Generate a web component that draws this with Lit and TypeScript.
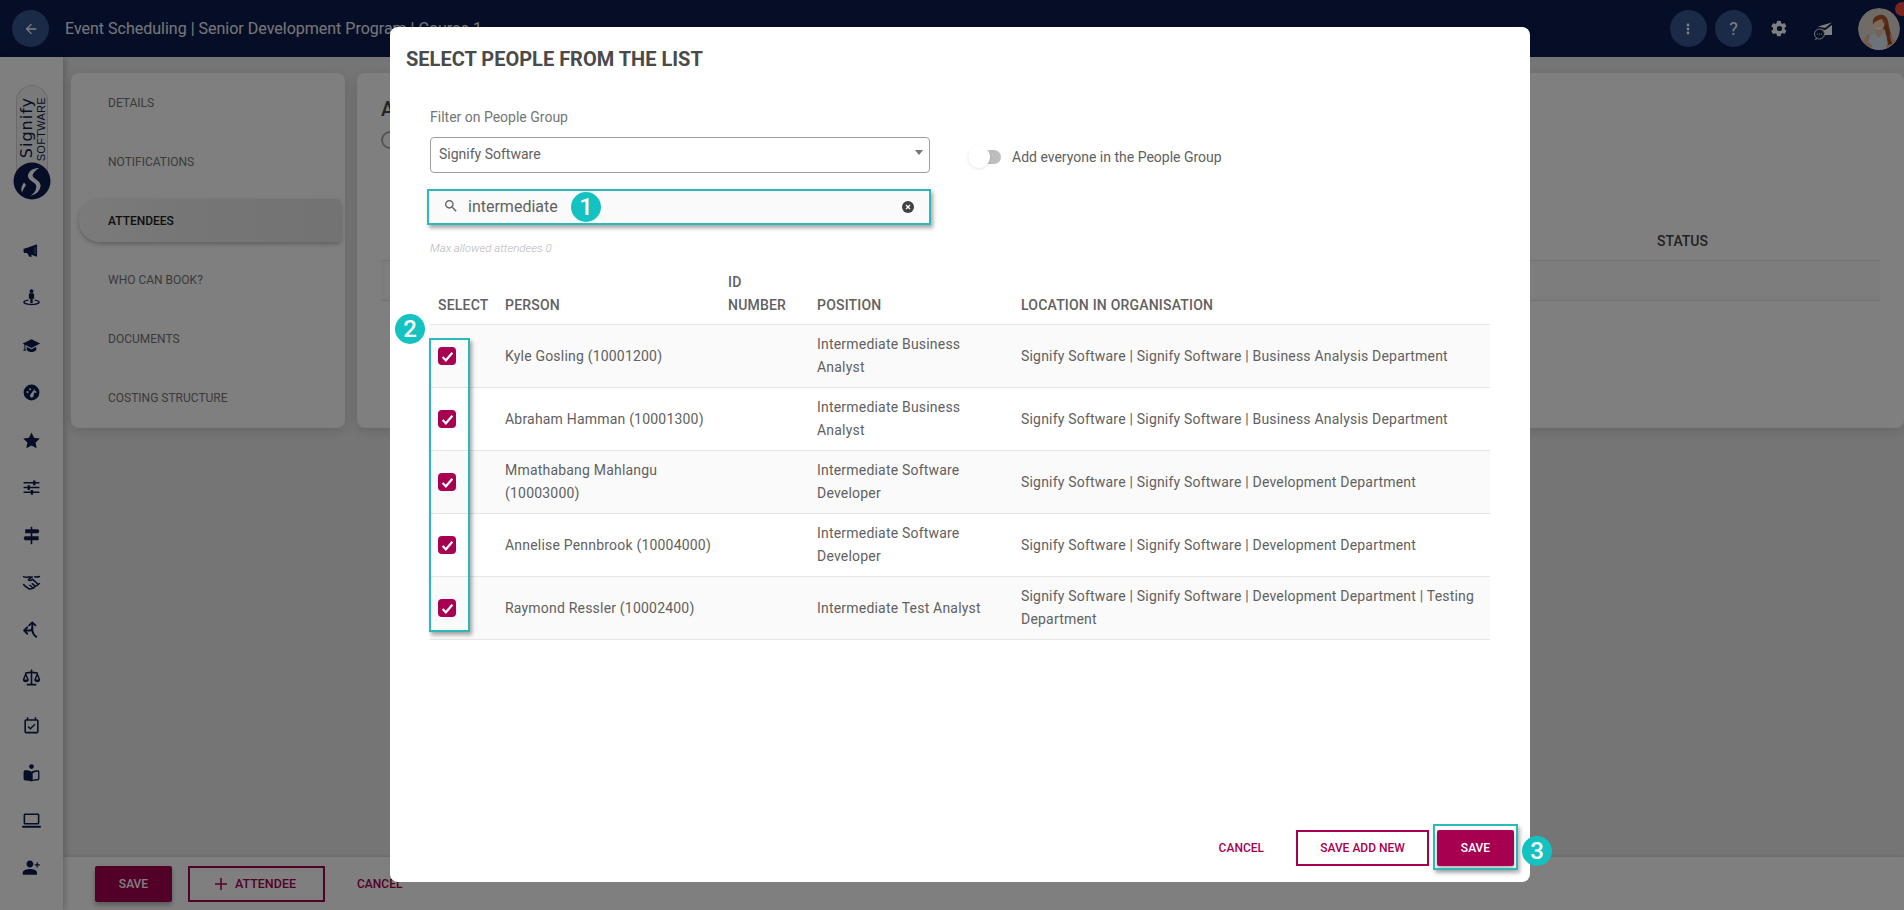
import { LitElement, html, css, svg } from "lit";
import { customElement, state } from "lit/decorators.js";

const ICONS = [
  // megaphone
  svg`<path d="M4 9.5 19 4v16L4 14.500z"/><rect x="2" y="9.500" width="5" height="5.500" rx="1"/><path d="M7 15h4l1.400 5H9z"/><path d="M15.500 8v8l2 1V7z" fill="#fff" opacity=".25"/>`,
  // person on ring
  svg`<circle cx="12" cy="4" r="2.400"/><path d="M8.700 8.200c0-.9.7-1.500 1.500-1.500h3.600c.8 0 1.500.6 1.500 1.500v5.300h-1.800V19h-3v-5.500H8.700z"/><path fill-rule="evenodd" d="M8 14.600v1.600c-2.700.4-4.500 1.100-4.500 1.800 0 1 3.800 1.900 8.500 1.900s8.500-.9 8.500-1.900c0-.7-1.800-1.400-4.500-1.800v-1.600c4 .5 6.500 1.800 6.500 3.400 0 2.100-4.500 3.700-10.500 3.700S1.500 20.100 1.500 18c0-1.600 2.500-2.900 6.500-3.400z"/>`,
  // graduation cap
  svg`<path d="M6 13.500v4.200c1.500 1.700 3.700 2.600 6 2.600s4.500-.9 6-2.600v-4.200L12 16.700z"/><path d="M12 4 1 9.500l2 1.100V17H1.800v1.500H5V17H4.300v-5.700L12 15l11-5.500z"/>`,
  // gauge
  svg`<path fill-rule="evenodd" d="M12 2a10 10 0 1 0 0 20 10 10 0 0 0 0-20zM7 12.800a1.300 1.300 0 1 1 0-2.600 1.300 1.300 0 0 1 0 2.600zm2-5a1.300 1.300 0 1 1 2.600 0 1.300 1.300 0 0 1-2.600 0zm4.800 9.900a2.200 2.200 0 0 1-3.600-2.400L15.500 8l.9.400-1.800 7.300a2.200 2.200 0 0 1-.8 2zm3.200-5a1.300 1.300 0 1 1 0-2.600 1.300 1.300 0 0 1 0 2.600z"/>`,
  // star
  svg`<path d="M12 1.800 15.200 8.500l7.300 1-5.300 5.100 1.300 7.300L12 18.400l-6.500 3.500 1.300-7.300L1.500 9.500l7.300-1z"/>`,
  // tune
  svg`<path d="M2 5h12V3h3v2h5v2h-5v2h-3V7H2zm0 6h5V9h3v2h12v2H10v2H7v-2H2zm0 6h9v-2h3v2h8v2h-8v2h-3v-2H2z"/>`,
  // signpost
  svg`<path d="M11 1h2v3h7.500l1.500 2.500L20.500 9H13v3h-2V9H4V4h7zM3.500 13H11v-1h2v1h8v5h-8v5h-2v-5H3.500L2 15.500z"/>`,
  // handshake
  svg`<g fill="none" stroke="currentColor" stroke-width="1.900" stroke-linecap="round" stroke-linejoin="round"><path d="M2 4.500c2 1 4 1 6 .5h5l-5 3.500c1.500 1.500 3.500 1 5.500-.5l6 5.500"/><path d="M22 4.500c-2 .8-4 .8-6 .2"/><path d="M2 14.500c1.500 2 3.500 3.500 5.500 4.500 1 1.500 3.500 1.500 5 .5 1.500 0 3-1 3.500-2.300 2-1 4-2 6-4"/><path d="M10 15.500l3 2.500M13 13.500l3.500 3"/></g>`,
  // split arrows
  svg`<g fill="none" stroke="currentColor" stroke-width="2.400" stroke-linecap="round" stroke-linejoin="round"><path d="M13 3v7c0 3 1 7 5 10"/><path d="M3 12h6c2 0 4-.5 4-3"/><path d="M9 5.500 13 2l4 3.500"/><path d="M6.500 8 3 12l3.500 4"/></g>`,
  // scale
  svg`<path d="M11 2h2v2.500l7 1V7l3 7.500c0 2.200-1.700 3.500-3.700 3.500s-3.800-1.300-3.800-3.500L18.500 7.300 13 6.500V20h5v2H6v-2h5V6.500l-5.500.8L8.500 14.500C8.500 16.700 6.700 18 4.700 18S1 16.700 1 14.500L4 7V5.500l7-1zM3 14.500h3.500L4.800 10zm14.500 0H21L19.300 10z"/>`,
  // calendar check
  svg`<path fill-rule="evenodd" d="M6 1.500h2V4h8V1.500h2V4h1c1.100 0 2 .9 2 2v14c0 1.100-.9 2-2 2H5c-1.100 0-2-.9-2-2V6c0-1.100.9-2 2-2h1zM5 6v14h14V6z"/><path d="m10.500 17.500-3.500-3.500 1.300-1.300 2.200 2.200 5.200-5.200 1.300 1.300z"/>`,
  // person reading
  svg`<circle cx="12" cy="4.500" r="3"/><path fill-rule="evenodd" d="M12 11c-2-1.500-5-2-8-2-1.100 0-2 .9-2 2v9c0 1.100.9 2 2 2 3 0 6 .3 8 1.500 2-1.200 5-1.500 8-1.500 1.100 0 2-.9 2-2v-9c0-1.100-.9-2-2-2-3 0-6 .5-8 2zm1.500 2v8.200c1.800-.6 4-.9 6.800-.9V11c-2.800 0-5 .6-6.800 2z"/>`,
  // laptop
  svg`<path d="M20 17c1.100 0 2-.9 2-2V5c0-1.100-.9-2-2-2H4c-1.100 0-2 .9-2 2v10c0 1.100.9 2 2 2zM4 5h16v10H4z" fill-rule="evenodd"/><rect y="18.500" width="24" height="2.500" rx="1.200"/>`,
  // person add
  svg`<path d="M10 12c2.500 0 4.300-1.900 4.300-4.300S12.500 3.300 10 3.300 5.700 5.200 5.700 7.700 7.500 12 10 12zm0 2c-3.500 0-9 1.400-9 4.400V21h18v-2.600c0-3-5.500-4.400-9-4.400zM20 8V5.500h-1.500V8H16v1.500h2.500V12H20V9.500h2.500V8z"/>`,
  // cut off at the bottom of the window
  svg`<circle cx="12" cy="9" r="2.500"/><path d="M8 12h8v8H8z"/>`,
];

@customElement("sf-icon")
export class SfIcon extends LitElement {
  static properties = { d: { type: String }, size: { type: Number } };
  declare d: string;
  declare size: number;

  static styles = css`
    :host {
      display: inline-flex;
    }
    svg {
      display: block;
      fill: currentColor;
    }
  `;

  render() {
    return html`<svg
      viewBox="0 0 24 24"
      width=${this.size ?? 24}
      height=${this.size ?? 24}
    >
      <path d=${this.d}></path>
    </svg>`;
  }
}

const P_BACK =
  "M20 11H7.830l5.590-5.590L12 4l-8 8 8 8 1.410-1.410L7.830 13H20v-2z";
const P_SEARCH =
  "M15.500 14h-.790l-.280-.270C15.410 12.590 16 11.110 16 9.500 16 5.910 13.090 3 9.500 3S3 5.910 3 9.500 5.910 16 9.500 16c1.610 0 3.090-.590 4.230-1.570l.270.280v.790l5 4.990L20.490 19l-4.990-5zm-6 0C7.010 14 5 11.990 5 9.500S7.010 5 9.500 5 14 7.010 14 9.500 11.990 14 9.500 14z";
const P_GEAR =
  "M21.300 14.600 19.200 13.400a8 8 0 0 0 0-2.800l2.100-1.200c.3-.1.400-.4.300-.7a11 11 0 0 0-2.400-4.200.6.600 0 0 0-.7-.1l-2.100 1.200a8 8 0 0 0-2.400-1.400V2c0-.3-.2-.5-.5-.6a11 11 0 0 0-4.800 0c-.3.100-.5.300-.5.600v2.400a8 8 0 0 0-2.400 1.400L3.700 4.600a.6.600 0 0 0-.7.100 11 11 0 0 0-2.400 4.200c-.1.300 0 .6.300.7l2.100 1.200a8 8 0 0 0 0 2.800l-2.100 1.200c-.3.100-.4.400-.3.700a11 11 0 0 0 2.400 4.200c.2.200.5.300.7.100l2.100-1.200a8 8 0 0 0 2.400 1.400V22c0 .3.2.5.5.6a11 11 0 0 0 4.800 0c.3-.1.5-.3.500-.6v-2.400a8 8 0 0 0 2.400-1.400l2.100 1.200c.2.200.5.100.7-.1a11 11 0 0 0 2.400-4.200c.1-.3 0-.6-.3-.7zM12 15.700a3.700 3.700 0 1 1 0-7.400 3.700 3.700 0 0 1 0 7.400z";

type Person = { name: string; position: string; location: string };

const DEV = "Signify Software | Signify Software | Development Department";
const BA = "Signify Software | Signify Software | Business Analysis Department";

const PEOPLE: Person[] = [
  { name: "Kyle Gosling (10001200)", position: "Intermediate Business Analyst", location: BA },
  { name: "Abraham Hamman (10001300)", position: "Intermediate Business Analyst", location: BA },
  { name: "Mmathabang Mahlangu (10003000)", position: "Intermediate Software Developer", location: DEV },
  { name: "Annelise Pennbrook (10004000)", position: "Intermediate Software Developer", location: DEV },
  { name: "Raymond Ressler (10002400)", position: "Intermediate Test Analyst", location: DEV + " | Testing Department" },
];

const MENU = ["Details", "Notifications", "Attendees", "Who can book?", "Documents", "Costing structure"];

@customElement("app-root")
export class AppRoot extends LitElement {
  @state() private selected = "Attendees";

  static styles = css`
    :host {
      display: flex;
      flex-direction: column;
      position: relative;
      width: 1904px;
      height: 910px;
      overflow: hidden;
      background: #ebebeb;
      font-family: Roboto, "Liberation Sans", sans-serif;
      font-size: 14px;
      color: #616161;
    }

    /* top bar */
    .topbar {
      flex: none;
      display: flex;
      align-items: center;
      height: 57px;
      background: #0c1c4e;
      color: #fff;
    }
    .round {
      display: flex;
      align-items: center;
      justify-content: center;
      width: 37px;
      height: 37px;
      border-radius: 50%;
      background: #36548f;
      color: #fff;
    }
    .back {
      margin-left: 12px;
    }
    .page-title {
      margin-left: 16px;
      font-size: 16px;
      white-space: nowrap;
      color: #fff;
      opacity: 0.92;
    }
    .top-actions {
      margin-left: auto;
      display: flex;
      align-items: center;
      margin-right: 4px;
    }
    .top-actions .help {
      margin-left: 8.500px;
      font-size: 18px;
    }
    .gear {
      margin-left: 18.500px;
    }
    .mail {
      margin-left: 24.500px;
      width: 22px;
      height: 22px;
      color: #fff;
    }
    .avatar-wrap {
      position: relative;
      margin-left: 24px;
      width: 42px;
      height: 42px;
    }
    .avatar {
      display: block;
      border-radius: 50%;
    }
    .dot {
      position: absolute;
      top: -6px;
      right: -9px;
      width: 14px;
      height: 14px;
      border-radius: 50%;
      background: #f04a44;
    }

    .body {
      flex: 1;
      display: flex;
      min-height: 0;
    }

    /* left rail */
    .rail {
      flex: none;
      width: 63px;
      display: flex;
      flex-direction: column;
      align-items: center;
      background: #fff;
      box-shadow: 2px 0 6px rgba(0, 0, 0, 0.22);
      color: #0c1c4e;
      z-index: 1;
    }
    .logo {
      position: relative;
      flex: none;
      margin-top: 28px;
      width: 32px;
      height: 100px;
      display: flex;
      justify-content: center;
    }
    .logo-pill {
      width: 32px;
      height: 90px;
      border-radius: 16px 16px 0 0;
      border: 1px solid #d4d4d4;
      box-sizing: border-box;
      border-bottom: none;
      background: #f5f5f5;
      display: flex;
      justify-content: center;
      align-items: flex-start;
      padding-top: 11px;
      color: #0c1c4e;
    }
    .logo-pill span {
      writing-mode: vertical-rl;
      transform: rotate(180deg);
      white-space: nowrap;
    }
    .logo-name {
      font-family: "DejaVu Sans", sans-serif;
      font-size: 16px;
      line-height: 18px;
      letter-spacing: 1px;
    }
    .logo-sub {
      font-family: "Liberation Sans", sans-serif;
      font-size: 11px;
      line-height: 10px;
      letter-spacing: 0.3px;
    }
    .logo-mark {
      position: absolute;
      left: -3px;
      top: 77px;
    }
    .rail-icons {
      flex: none;
      margin-top: 55.500px;
      display: flex;
      flex-direction: column;
      align-items: center;
      gap: 28.500px;
    }
    .rail-icons svg {
      display: block;
      width: 19px;
      height: 19px;
      fill: currentColor;
    }

    /* page behind the dialog */
    .main {
      flex: 1;
      min-width: 0;
      display: flex;
      flex-direction: column;
    }
    .cards {
      flex: 1;
      display: flex;
      align-items: flex-start;
      gap: 12px;
      padding: 16px 0 0 8px;
    }
    .card {
      height: 355px;
      background: #fff;
      border-radius: 8px;
      box-shadow: 0 3px 12px rgba(0, 0, 0, 0.14);
      box-sizing: border-box;
    }
    .menu {
      flex: none;
      width: 274px;
      padding: 8px 4px 0 8px;
      display: flex;
      flex-direction: column;
    }
    .menu-item {
      height: 43px;
      flex: none;
      margin-bottom: 16px;
      display: flex;
      align-items: center;
      padding-left: 29px;
      font-size: 12px;
      color: #757575;
      text-transform: uppercase;
    }
    .menu-item.on {
      background: linear-gradient(90deg, #f6f6f6, #ececec 45%, #e6e6e6);
      border-radius: 22px 5px 5px 22px;
      box-shadow: 0 2px 5px rgba(0, 0, 0, 0.28);
      color: #1a1a1a;
      font-weight: 500;
    }
    .content {
      flex: 1;
      position: relative;
      padding: 24px 24px 0 24px;
    }
    .content h2 {
      margin: 0;
      font-size: 20px;
      font-weight: 500;
      line-height: 24px;
      color: #444;
    }
    .radio {
      margin-top: 10px;
      width: 18px;
      height: 18px;
      box-sizing: border-box;
      border: 2px solid #aaa;
      border-radius: 50%;
    }
    .bg-head {
      margin-top: 75px;
      height: 37px;
      box-sizing: border-box;
      display: flex;
      justify-content: flex-end;
      padding-right: 172px;
      font-weight: 500;
      color: #444;
      line-height: 34px;
      border-bottom: 1px solid #e6e6e6;
      font-size: 14px;
    }
    .bg-row {
      height: 40px;
      box-sizing: border-box;
      background: #fafafa;
      border-bottom: 1px solid #e6e6e6;
    }
    .footer {
      flex: none;
      height: 53px;
      background: #fff;
      box-shadow: 0 -1px 3px rgba(0, 0, 0, 0.12);
      display: flex;
      align-items: center;
      padding-left: 32px;
      gap: 16px;
    }

    /* buttons */
    .btn {
      display: flex;
      align-items: center;
      justify-content: center;
      height: 36px;
      box-sizing: border-box;
      font-size: 12px;
      font-weight: 500;
      color: #a70050;
      white-space: nowrap;
    }
    .btn.solid {
      width: 77px;
      background: #a70050;
      color: #fff;
      border-radius: 2px;
      box-shadow: 0 3px 5px rgba(0, 0, 0, 0.3);
    }
    .btn.line {
      border: 2px solid #a70050;
    }
    .btn.add {
      width: 137px;
      gap: 7px;
      padding-right: 3px;
      font-size: 12.500px;
    }
    .btn.text {
      padding: 0 16px;
    }

    /* dialog */
    .scrim {
      position: absolute;
      inset: 0;
      background: rgba(0, 0, 0, 0.5);
      z-index: 5;
    }
    .modal {
      position: absolute;
      left: 390px;
      top: 27px;
      width: 1140px;
      height: 855px;
      background: #fff;
      border-radius: 8px;
      display: flex;
      flex-direction: column;
    }
    .modal h1 {
      margin: 0;
      height: 64px;
      line-height: 64px;
      padding-left: 16px;
      font-size: 20px;
      font-weight: 700;
      color: #4a4a4a;
    }
    .modal-body {
      padding: 16px 40px 0;
    }
    .filters {
      display: flex;
      align-items: flex-start;
    }
    .filter-col {
      flex: none;
      width: 500px;
    }
    .field-label {
      height: 20px;
      line-height: 20px;
      color: #757575;
    }
    .select {
      position: relative;
      margin-top: 10px;
      height: 36px;
      box-sizing: border-box;
      border: 1px solid #9e9e9e;
      border-radius: 4px;
      padding: 0 0 2px 8px;
      display: flex;
      align-items: center;
      color: #616161;
    }
    .caret {
      position: absolute;
      right: 6px;
      top: 12px;
      width: 0;
      height: 0;
      border-left: 4px solid transparent;
      border-right: 4px solid transparent;
      border-top: 5px solid #757575;
    }
    .search {
      position: relative;
      margin: 16px -1px 0 -3px;
      height: 36px;
      box-sizing: border-box;
      border: 2px solid #2db9b9;
      box-shadow: 2px 3px 4px rgba(0, 0, 0, 0.35);
      background: #fafafa;
      display: flex;
      align-items: center;
      padding: 0 0 2px 14px;
      gap: 9px;
      font-size: 16px;
      color: #616161;
    }
    .search .clear {
      position: absolute;
      right: 15px;
      top: 10px;
      width: 12px;
      height: 12px;
    }
    .badge {
      position: absolute;
      display: flex;
      align-items: center;
      justify-content: center;
      width: 30px;
      height: 30px;
      border-radius: 50%;
      background: #14c2c2;
      color: #fff;
      font-size: 24px;
      font-weight: 500;
      line-height: 1;
      z-index: 2;
    }
    .search .badge {
      left: 142px;
      top: 1px;
    }
    .hint {
      margin-top: 15px;
      height: 16px;
      line-height: 16px;
      font-size: 11.500px;
      font-style: italic;
      font-weight: 300;
      color: #b5b5b5;
    }
    .toggle-row {
      margin: 39px 0 0 38px;
      display: flex;
      align-items: center;
      gap: 11px;
      color: #616161;
    }
    .toggle {
      position: relative;
      width: 33px;
      height: 14px;
      margin: 4px 0;
      border-radius: 7px;
      background: #bdbdbd;
    }
    .knob {
      position: absolute;
      left: 0;
      top: -4px;
      width: 22px;
      height: 22px;
      border-radius: 50%;
      background: #fff;
      box-shadow: 0 1px 3px rgba(0, 0, 0, 0.1);
    }

    /* people table */
    .table {
      position: relative;
      margin-top: 15px;
      letter-spacing: 0.2px;
    }
    .grid {
      display: grid;
      grid-template-columns: 67px 223px 89px 204px 1fr;
    }
    .grid > div {
      padding: 0 8px;
      line-height: 23px;
    }
    .head {
      align-items: end;
      height: 54px;
      padding-bottom: 8px;
      box-sizing: border-box;
      border-bottom: 1px solid #e6e6e6;
      font-weight: 500;
      color: #616161;
    }
    .id-col {
      width: min-content;
    }
    .row {
      align-items: center;
      height: 63px;
      box-sizing: border-box;
      border-bottom: 1px solid #e6e6e6;
      color: #616161;
    }
    .row:nth-of-type(even) {
      background: #fafafa;
    }
    .check {
      display: flex;
      align-items: center;
      justify-content: center;
      width: 18px;
      height: 18px;
      border-radius: 4px;
      background: #a70050;
    }
    .mark-col {
      position: absolute;
      left: -1px;
      top: 67px;
      width: 41px;
      height: 294px;
      box-sizing: border-box;
      border: 2px solid #2db9b9;
      box-shadow: 2px 3px 4px rgba(0, 0, 0, 0.35);
      pointer-events: none;
    }
    .table .badge {
      left: -35px;
      top: 43px;
      letter-spacing: 0;
    }

    .actions {
      margin-top: auto;
      display: flex;
      justify-content: flex-end;
      align-items: center;
      padding: 0 16px 16px 0;
    }
    .actions .line {
      width: 133px;
      margin: 0 8px 0 16px;
    }
    .actions .solid {
      position: relative;
    }
    .save-mark {
      position: absolute;
      inset: -6px -4px -4px -4px;
      border: 2px solid #2db9b9;
      box-shadow: 2px 3px 4px rgba(0, 0, 0, 0.3);
    }
    .actions .badge {
      left: 85px;
      top: 6px;
    }
  `;

  private renderRail() {
    return html`<aside class="rail">
      <div class="logo">
        <div class="logo-pill">
          <span class="logo-name">Signify</span>
          <span class="logo-sub">SOFTWARE</span>
        </div>
        <svg class="logo-mark" width="38" height="38" viewBox="0 0 38 38">
          <circle cx="19" cy="19" r="18.500" fill="#0c1c4e"></circle>
          <path
            d="M26 6C21 6 16 8.500 15 13c-.8 3.500 3 5.500 5.500 7.500 3 2 3.500 4 2 8-1.500 2.500-3 4-5 5 5-.5 9-4 10-9 .7-3.500-2.500-5.500-5-7.500-2.500-2-3.500-3-2.500-5 1-2 3-4 6-6z"
            fill="#fff"
          ></path>
          <path d="M13 23c-2 3-3.500 5.500-4 7.500-1.500-3-.5-6.500 2-10z" fill="#fff"></path>
        </svg>
      </div>
      <div class="rail-icons">
        ${ICONS.map((i) => html`<svg viewBox="0 0 24 24">${i}</svg>`)}
      </div>
    </aside>`;
  }

  private renderPage() {
    return html`<section class="main">
      <div class="cards">
        <nav class="card menu">
          ${MENU.map(
            (m) =>
              html`<div class="menu-item ${m === this.selected ? "on" : ""}">${m}</div>`
          )}
        </nav>
        <div class="card content">
          <h2>Attendees</h2>
          <div class="radio"></div>
          <div class="bg-head"><span>STATUS</span></div>
          <div class="bg-row"></div>
        </div>
      </div>
      <div class="footer">
        <div class="btn solid">SAVE</div>
        <div class="btn line add">
          <svg width="14" height="14" viewBox="0 0 14 14">
            <path d="M6.200 1h1.600v5.200H13v1.600H7.800V13H6.200V7.800H1V6.200h5.200z" fill="currentColor"></path>
          </svg>
          ATTENDEE
        </div>
        <div class="btn text">CANCEL</div>
      </div>
    </section>`;
  }

  private renderModal() {
    return html`<div class="scrim">
      <div class="modal">
        <h1>SELECT PEOPLE FROM THE LIST</h1>
        <div class="modal-body">
          <div class="filters">
            <div class="filter-col">
              <div class="field-label">Filter on People Group</div>
              <div class="select">Signify Software<i class="caret"></i></div>
              <div class="search">
                <sf-icon d=${P_SEARCH} size="16"></sf-icon>
                intermediate
                <span class="badge">1</span>
                <svg class="clear" viewBox="0 0 12 12">
                  <circle cx="6" cy="6" r="6" fill="#424242"></circle>
                  <path d="M4 4l4 4M8 4l-4 4" stroke="#fff" stroke-width="1.300"></path>
                </svg>
              </div>
              <div class="hint">Max allowed attendees 0</div>
            </div>
            <div class="toggle-row">
              <div class="toggle"><div class="knob"></div></div>
              Add everyone in the People Group
            </div>
          </div>
          <div class="table">
            <div class="grid head">
              <div>SELECT</div>
              <div>PERSON</div>
              <div class="id-col">ID NUMBER</div>
              <div>POSITION</div>
              <div>LOCATION IN ORGANISATION</div>
            </div>
            ${PEOPLE.map(
              (p) => html`<div class="grid row">
                <div>
                  <span class="check">
                    <svg width="13" height="13" viewBox="0 0 12 12">
                      <path d="M1.500 6.500l3 3 6-7" fill="none" stroke="#fff" stroke-width="2"></path>
                    </svg>
                  </span>
                </div>
                <div>${p.name}</div>
                <div></div>
                <div>${p.position}</div>
                <div>${p.location}</div>
              </div>`
            )}
            <div class="mark-col"></div>
            <span class="badge">2</span>
          </div>
        </div>
        <div class="actions">
          <div class="btn text">CANCEL</div>
          <div class="btn line">SAVE ADD NEW</div>
          <div class="btn solid">
            SAVE
            <i class="save-mark"></i>
            <span class="badge">3</span>
          </div>
        </div>
      </div>
    </div>`;
  }

  render() {
    return html`
      <header class="topbar">
        <div class="round back"><sf-icon d=${P_BACK} size="16"></sf-icon></div>
        <div class="page-title">Event Scheduling | Senior Development Program | Course 1</div>
        <div class="top-actions">
          <div class="round">
            <svg width="4" height="12" viewBox="0 0 4 12">
              <circle cx="2" cy="2" r="1.400" fill="#fff"></circle>
              <circle cx="2" cy="6" r="1.400" fill="#fff"></circle>
              <circle cx="2" cy="10" r="1.400" fill="#fff"></circle>
            </svg>
          </div>
          <div class="round help">?</div>
          <sf-icon class="gear" d=${P_GEAR} size="17"></sf-icon>
          <svg class="mail" viewBox="0 0 22 22">
            <path d="M6 8.500 20 4.500 13 10z" fill="#fff"></path>
            <path d="M20 7v10h-7c0-3.500-2.500-6-5-7l5 2.200z" fill="#fff"></path>
            <circle cx="7.500" cy="16" r="5" fill="#0c1c4e" stroke="#fff" stroke-width=".9"></circle>
            <circle cx="5.500" cy="16" r=".6" fill="#fff"></circle>
            <circle cx="7.500" cy="16" r=".6" fill="#fff"></circle>
            <circle cx="9.500" cy="16" r=".6" fill="#fff"></circle>
            <path d="M4 20 2.500 22l3-1z" fill="#fff"></path>
          </svg>
          <div class="avatar-wrap">
            <svg class="avatar" width="42" height="42" viewBox="0 0 42 42">
              <defs>
                <clipPath id="av"><circle cx="21" cy="21" r="21"></circle></clipPath>
              </defs>
              <g clip-path="url(#av)">
                <rect width="42" height="42" fill="#ded7cf"></rect>
                <path d="M15 16c-2-10 13-13 15-3 1 7 3 14 6 22l-6 3-3-16z" fill="#b3562c"></path>
                <path d="M7 42l4-12c1-3 5-4 10-5 5 1 8 2 9 5l4 12z" fill="#dbe8f2"></path>
                <path d="M18 20h6v7l-3 3-3-3z" fill="#eec3a8"></path>
                <ellipse cx="21" cy="15.500" rx="5.500" ry="7" fill="#f5d2bb"></ellipse>
                <path d="M15 16c0-6 4-9 8-8 2 1 4 4 3 8l-2-5c-3 1-7 2-9 5z" fill="#b3562c"></path>
                <path d="M18 19c2 1.500 4 1.500 6 0-1 3-5 3-6 0z" fill="#fff"></path>
                <path d="M4 34l6-8 2 2-2 6 4 3-1 5z" fill="#e4b79d"></path>
                <path d="M38 34l-6-8-2 2 2 6-4 3 1 5z" fill="#e4b79d"></path>
                <path d="M29 16c2 7 3 13 5 20l-4 1-3-18z" fill="#a14a25"></path>
              </g>
            </svg>
            <i class="dot"></i>
          </div>
        </div>
      </header>
      <div class="body">${this.renderRail()} ${this.renderPage()}</div>
      ${this.renderModal()}
    `;
  }
}
